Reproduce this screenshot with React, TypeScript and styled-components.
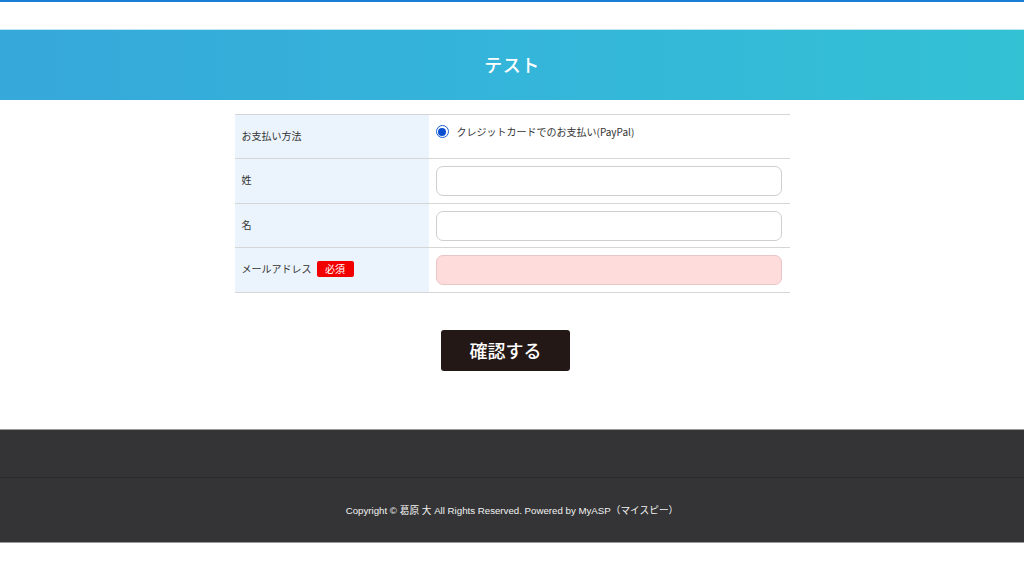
import React from "react";
import styled, { createGlobalStyle } from "styled-components";

const Global = createGlobalStyle`
  html, body { margin: 0; padding: 0; background: #fff; }
  body { font-family: "Liberation Sans", "Noto Sans CJK JP", sans-serif; color: #333; }
  * { box-sizing: border-box; }
`;

const Page = styled.div`
  display: flex;
  flex-direction: column;
  border-top: 2px solid #1a7fd6;
`;

const Header = styled.header`
  margin-top: 27px;
  height: 71px;
  display: flex;
  align-items: center;
  justify-content: center;
  padding-bottom: 3px;
  background: linear-gradient(90deg, #36a8da 0%, #34b5da 50%, #33c1d4 100%);
  border-top: 1px solid #bfe6f3;
`;

const Title = styled.h1`
  margin: 0;
  font-family: "Noto Sans CJK JP", sans-serif;
  font-size: 18px;
  font-weight: 500;
  color: #fff;
  letter-spacing: 0.5px;
`;

const Main = styled.main`
  display: flex;
  flex-direction: column;
  align-items: center;
  padding: 14px 0 58px;
`;

const Table = styled.div`
  width: 555px;
  border-top: 1px solid #d6d6d6;
  display: flex;
  flex-direction: column;
`;

const Row = styled.div<{ $h: number }>`
  display: grid;
  grid-template-columns: 194px 1fr;
  height: ${(p) => p.$h}px;
  border-bottom: 1px solid #d6d6d6;
`;

const Label = styled.div`
  background: #ebf4fc;
  display: flex;
  align-items: center;
  gap: 5px;
  padding-left: 7px;
  padding-bottom: 3px;
  font-family: "Noto Sans CJK JP", sans-serif;
  font-size: 10px;
  color: #333;
`;

const Badge = styled.span`
  display: inline-flex;
  align-items: center;
  justify-content: center;
  width: 37px;
  height: 16px;
  border-radius: 2px;
  background: #f20000;
  color: #fff;
  font-size: 10px;
`;

const Cell = styled.div<{ $top?: boolean }>`
  display: flex;
  align-items: ${(p) => (p.$top ? "flex-start" : "center")};
  padding: ${(p) => (p.$top ? "9px 7px 0 7px" : "0 7px")};
`;

const RadioLabel = styled.label`
  display: flex;
  align-items: center;
  gap: 8px;
  font-family: "Noto Sans CJK JP", sans-serif;
  font-size: 10px;
  color: #333;
`;

const RadioDot = styled.span`
  width: 13px;
  height: 13px;
  border-radius: 50%;
  border: 1.5px solid #1a5fd6;
  display: flex;
  align-items: center;
  justify-content: center;
  &::after {
    content: "";
    width: 8px;
    height: 8px;
    border-radius: 50%;
    background: #0b4fd1;
  }
`;

const Input = styled.input<{ $error?: boolean }>`
  width: 346px;
  height: 30px;
  border-radius: 7px;
  border: 1px solid ${(p) => (p.$error ? "#e9c6c6" : "#cfcfcf")};
  background: ${(p) => (p.$error ? "#ffdcdc" : "#fff")};
  outline: none;
  padding: 0 8px;
`;

const Button = styled.button`
  margin: 37px 13px 0 0;
  width: 129px;
  height: 41px;
  border: none;
  border-radius: 3px;
  background: #241816;
  color: #fff;
  font-family: "Noto Sans CJK JP", sans-serif;
  font-size: 18px;
  font-weight: 500;
  padding: 0 0 2px;
  cursor: pointer;
`;

const Footer = styled.footer`
  background: #343436;
  border-top: 1px solid #9a9a9a;
  border-bottom: 1px solid #9a9a9a;
  display: flex;
  flex-direction: column;
`;

const FooterTop = styled.div`
  height: 48px;
  border-bottom: 1px solid #2b2b2d;
`;

const FooterBottom = styled.div`
  height: 64px;
  display: flex;
  align-items: center;
  justify-content: center;
`;

const Copy = styled.p`
  margin: 0;
  font-family: "Liberation Sans", "Noto Sans CJK JP", sans-serif;
  font-size: 9.7px;
  color: #f2f2f2;
`;

export default function App() {
  return (
    <>
      <Global />
      <Page>
        <Header>
          <Title>テスト</Title>
        </Header>
        <Main>
          <Table>
            <Row $h={44}>
              <Label>お支払い方法</Label>
              <Cell $top>
                <RadioLabel>
                  <RadioDot />
                  クレジットカードでのお支払い(PayPal)
                </RadioLabel>
              </Cell>
            </Row>
            <Row $h={45}>
              <Label>姓</Label>
              <Cell>
                <Input type="text" />
              </Cell>
            </Row>
            <Row $h={44}>
              <Label>名</Label>
              <Cell>
                <Input type="text" />
              </Cell>
            </Row>
            <Row $h={45}>
              <Label>
                メールアドレス<Badge>必須</Badge>
              </Label>
              <Cell>
                <Input type="text" $error />
              </Cell>
            </Row>
          </Table>
          <Button>確認する</Button>
        </Main>
        <Footer>
          <FooterTop />
          <FooterBottom>
            <Copy>Copyright © 葛原 大 All Rights Reserved. Powered by MyASP（マイスピー）</Copy>
          </FooterBottom>
        </Footer>
      </Page>
    </>
  );
}
